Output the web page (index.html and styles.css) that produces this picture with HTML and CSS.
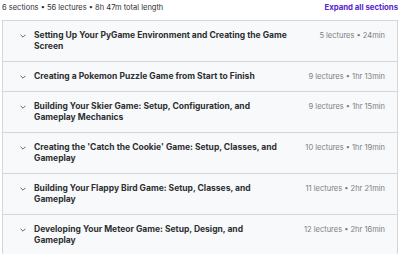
FILE: index.html
```html
<!DOCTYPE html>
<html lang="en">
<head>
    <meta charset="UTF-8">
    <title>Course content</title>
    <link rel="stylesheet" href="styles.css">
</head>
<body>
    <div class="curriculum">
        <div class="summary">
            <span class="summary-text">6 sections &bull; 56 lectures &bull; 8h 47m total length</span>
            <button type="button" class="expand-all">Expand all sections</button>
        </div>
        <div class="sections">
            <div class="section">
                <svg class="chevron" viewBox="0 0 10 6"><path d="M1 1l4 4 4-4"/></svg>
                <span class="title">Setting Up Your PyGame Environment and Creating the Game Screen</span>
                <span class="meta">5 lectures &bull; 24min</span>
            </div>
            <div class="section">
                <svg class="chevron" viewBox="0 0 10 6"><path d="M1 1l4 4 4-4"/></svg>
                <span class="title">Creating a Pokemon Puzzle Game from Start to Finish</span>
                <span class="meta">9 lectures &bull; 1hr 13min</span>
            </div>
            <div class="section">
                <svg class="chevron" viewBox="0 0 10 6"><path d="M1 1l4 4 4-4"/></svg>
                <span class="title">Building Your Skier Game: Setup, Configuration, and Gameplay Mechanics</span>
                <span class="meta">9 lectures &bull; 1hr 15min</span>
            </div>
            <div class="section">
                <svg class="chevron" viewBox="0 0 10 6"><path d="M1 1l4 4 4-4"/></svg>
                <span class="title">Creating the 'Catch the Cookie' Game: Setup, Classes, and Gameplay</span>
                <span class="meta">10 lectures &bull; 1hr 19min</span>
            </div>
            <div class="section">
                <svg class="chevron" viewBox="0 0 10 6"><path d="M1 1l4 4 4-4"/></svg>
                <span class="title">Building Your Flappy Bird Game: Setup, Classes, and Gameplay</span>
                <span class="meta">11 lectures &bull; 2hr 21min</span>
            </div>
            <div class="section">
                <svg class="chevron" viewBox="0 0 10 6"><path d="M1 1l4 4 4-4"/></svg>
                <span class="title">Developing Your Meteor Game: Setup, Design, and Gameplay</span>
                <span class="meta">12 lectures &bull; 2hr 16min</span>
            </div>
        </div>
    </div>
</body>
</html>
```

FILE: styles.css
```css
body {
    margin: 0;
    background: #ffffff;
    font-family: Inter, "Noto Sans", sans-serif;
    color: #2d2f31;
}
.curriculum {
    padding: 0 2px;
}
.summary {
    display: flex;
    justify-content: space-between;
    align-items: center;
    height: 20px;
}
.summary-text {
    font-size: 7.5px;
    color: #2d2f31;
    margin-top: -6px;
}
.expand-all {
    background: none;
    border: none;
    padding: 0;
    margin-top: -6px;
    font-family: inherit;
    font-size: 7.8px;
    font-weight: 700;
    color: #5624d0;
    cursor: pointer;
}
.sections {
    border: 1px solid #d1d7dc;
    border-bottom: none;
}
.section {
    display: flex;
    align-items: flex-start;
    background: #f7f9fa;
    border-bottom: 1px solid #d1d7dc;
    padding: 9px 12px 9px 17px;
}
.chevron {
    width: 6px;
    height: 4px;
    margin-top: 4px;
    margin-right: 8px;
    flex-shrink: 0;
    fill: none;
    stroke: #2d2f31;
    stroke-width: 1.2;
}
.title {
    flex: 1;
    font-size: 8.5px;
    font-weight: 700;
    line-height: 11px;
    padding-right: 20px;
}
.meta {
    font-size: 7.5px;
    line-height: 11px;
    color: #7a7f83;
    white-space: nowrap;
}
```
